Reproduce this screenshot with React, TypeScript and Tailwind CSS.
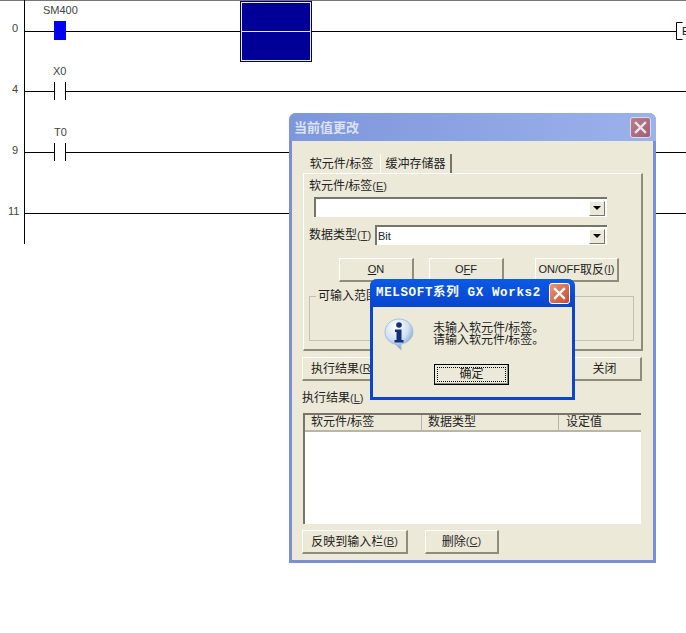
import React from "react";

const cjk = "font-['Liberation_Sans','Noto_Sans_CJK_SC',sans-serif]";

function Key({ k }: { k: string }) {
  return (
    <span className="text-[11px] text-[#333]">
      (<span className="underline">{k}</span>)
    </span>
  );
}

function XpButton({ className, children }: { className: string; children: React.ReactNode }) {
  return (
    <div
      className={`flex h-[24px] items-center justify-center whitespace-nowrap border-t border-l border-t-white border-l-white border-r-2 border-b-2 border-r-[#8f8c7c] border-b-[#8f8c7c] bg-[#ece9d8] text-[12px] text-[#222] ${className}`}
    >
      {children}
    </div>
  );
}

function Combo({ className, children }: { className: string; children?: React.ReactNode }) {
  return (
    <div className={`flex h-[20px] items-center justify-between border-t-2 border-l-2 border-t-[#77756a] border-l-[#77756a] bg-white pl-[1px] pr-[2px] ${className}`}>
      <span className="text-[11px] text-[#223]">{children}</span>
      <div className="flex h-[15px] w-[16px] items-center justify-center border-t border-l border-t-white border-l-white border-r border-b border-r-[#77756a] border-b-[#77756a] bg-[#ece9d8]">
        <div className="h-0 w-0 border-x-[4px] border-t-[4px] border-x-transparent border-t-black" />
      </div>
    </div>
  );
}

function CloseBox({ muted }: { muted?: boolean }) {
  return (
    <div
      className={`flex h-[21px] w-[21px] items-center justify-center rounded-[3px] border ${
        muted ? "border-[#d8dcf0] bg-gradient-to-br from-[#b8808c] to-[#a05c78]" : "border-white bg-gradient-to-br from-[#e8957c] to-[#c8482a]"
      }`}
    >
      <svg width="13" height="13" viewBox="0 0 13 13">
        <path d="M2 2 L11 11 M11 2 L2 11" stroke={muted ? "#f0e4ea" : "#fff"} strokeWidth="2.4" strokeLinecap="square" />
      </svg>
    </div>
  );
}

function Contact({ x, y, filled }: { x: number; y: number; filled?: boolean }) {
  return filled ? (
    <rect x={x} y={y - 9} width={12} height={19} fill="#0000f0" />
  ) : (
    <path d={`M${x + 0.5} ${y - 9}V${y + 9}M${x + 11.5} ${y - 9}V${y + 9}`} stroke="#000" fill="none" />
  );
}

function Ladder() {
  const texts = "font-['Liberation_Sans',sans-serif] text-[11px]";
  return (
    <svg className="absolute inset-0" width="686" height="633" viewBox="0 0 686 633">
      <rect width="686" height="1" fill="#777" />
      <path d="M24.5 0V244" stroke="#000" />
      <path d="M25 31.5H240M312 31.5H676" stroke="#000" />
      <path d="M25 91.5H54M66 91.5H686" stroke="#000" />
      <path d="M25 152.5H54M66 152.5H686" stroke="#000" />
      <path d="M25 213.5H686" stroke="#000" />
      <Contact x={54} y={30} filled />
      <Contact x={54} y={91} />
      <Contact x={54} y={152} />
      <rect x="240.5" y="1.5" width="71" height="60" fill="#000099" stroke="#00006e" />
      <rect x="241.5" y="2.5" width="69" height="58" fill="none" stroke="#e8e8f4" />
      <path d="M241 31.5H311" stroke="#e8e8f4" />
      <path d="M682.5 22.5H676.5V39.5H682.5" stroke="#000" fill="none" />
      <text x="682" y="35" className={texts} fill="#111">E</text>
      <g className={texts} fill="#444">
        <text x="43" y="14">SM400</text>
        <text x="53" y="75">X0</text>
        <text x="54" y="136">T0</text>
        <text x="12" y="32">0</text>
        <text x="12" y="93">4</text>
        <text x="12" y="154">9</text>
        <text x="8" y="215">11</text>
      </g>
    </svg>
  );
}

function InfoIcon() {
  return (
    <svg width="32" height="34" viewBox="0 0 32 34">
      <defs>
        <radialGradient id="bub" cx="0.4" cy="0.25" r="0.85">
          <stop offset="0" stopColor="#ffffff" />
          <stop offset="0.5" stopColor="#d3e2f5" />
          <stop offset="1" stopColor="#5f86bb" />
        </radialGradient>
      </defs>
      <path d="M16 2C8 2 2 8 2 15c0 7 5 11 10 12l6 6 0-6c7-1 12-6 12-12C30 8 24 2 16 2z" fill="url(#bub)" stroke="#a8c0de" />
      <circle cx="16" cy="8" r="2.8" fill="#14307a" />
      <path d="M12 12.5h6.5V23h2v2.5h-9V23h2v-8h-1.5z" fill="#14307a" />
    </svg>
  );
}

function MainDialog() {
  return (
    <div className="absolute left-[289px] top-[113px] flex h-[450px] w-[367px] flex-col rounded-t-[7px] border-x-[3px] border-b-[3px] border-[#7b8fd6] bg-[#ece9d8]">
      <div className="-mx-[3px] flex h-[28px] items-center justify-between rounded-t-[7px] bg-gradient-to-r from-[#7d96dc] to-[#9bb2ea] pl-[5px] pr-[5px]">
        <span className="pt-[2px] text-[13px] font-bold text-[#dbe2f6]">当前值更改</span>
        <CloseBox muted />
      </div>

      <div className="flex flex-col pl-[11px] pr-[11px]">
        <div className="mt-[12px] flex h-[20px] items-end">
          <div className="flex h-[20px] w-[77px] items-center justify-center pt-[1px] text-[12px] text-[#222]">软元件/标签</div>
          <div className="flex h-[19px] w-[72px] items-center justify-center border-l border-r-2 border-l-white border-r-[#77756a] pt-[1px] text-[12px] text-[#222]">缓冲存储器</div>
        </div>
        <div className="flex h-[178px] w-[340px] flex-col border-t border-l border-t-white border-l-white border-r-2 border-b-2 border-r-[#8f8c7c] border-b-[#8f8c7c] px-[5px]">
          <div className="mt-[4px] flex h-[16px] items-center text-[12px] text-[#222]">
            软元件/标签<Key k="E" />
          </div>
          <Combo className="ml-[5px] mt-[3px] w-[293px]" />
          <div className="mt-[8px] flex items-center text-[12px] text-[#222]">
            <span className="w-[66px] whitespace-nowrap">
              数据类型<Key k="T" />
            </span>
            <Combo className="w-[232px]">Bit</Combo>
          </div>
          <div className="mt-[13px] flex">
            <XpButton className="ml-[30px] w-[75px]">
              <span className="text-[11px]"><span className="underline">O</span>N</span>
            </XpButton>
            <XpButton className="ml-[15px] w-[75px]">
              <span className="text-[11px]">O<span className="underline">F</span>F</span>
            </XpButton>
            <XpButton className="ml-[31px] w-[84px]">
              <span className="text-[11px]">ON/OFF</span>取反<Key k="I" />
            </XpButton>
          </div>
          <fieldset className="mt-[7px] h-[52px] w-[325px] border border-[#c3c0ae] pl-[6px]">
            <legend className="px-[2px] text-[12px] leading-[14px] text-[#222]">可输入范围</legend>
          </fieldset>
        </div>

        <div className="-ml-[1px] mt-[6px] flex w-[340px] justify-between">
          <XpButton className="w-[100px] justify-start pl-[8px]">执行结果<Key k="R" /></XpButton>
          <XpButton className="w-[74px]">关闭</XpButton>
        </div>
        <div className="-ml-[1px] mt-[9px] flex h-[16px] items-center text-[12px] text-[#222]">
          执行结果<Key k="L" />
        </div>
        <div className="mt-[7px] flex h-[111px] w-[338px] flex-col border-t-2 border-l-2 border-t-[#77756a] border-l-[#77756a] bg-white">
          <div className="flex h-[17px] border-b-2 border-b-[#b9b6a4] bg-[#ece9d8] text-[12px] text-[#222]">
            <div className="w-[117px] border-r border-r-[#b9b6a4] pl-[6px] leading-[15px]">软元件/标签</div>
            <div className="w-[137px] border-r border-r-[#b9b6a4] pl-[6px] leading-[15px]">数据类型</div>
            <div className="flex-1 pl-[7px] leading-[15px]">设定值</div>
          </div>
        </div>
        <div className="-ml-[1px] mt-[6px] flex gap-[17px]">
          <XpButton className="w-[106px]">反映到输入栏<Key k="B" /></XpButton>
          <XpButton className="w-[74px]">删除<Key k="C" /></XpButton>
        </div>
      </div>
    </div>
  );
}

function MessageBox() {
  return (
    <div className="absolute left-[370px] top-[279px] flex h-[121px] w-[205px] flex-col rounded-t-[7px] border-x-[3px] border-b-[3px] border-[#0a45cc] bg-[#ece9d8]">
      <div className="-mx-[3px] flex h-[28px] items-center justify-between rounded-t-[7px] bg-gradient-to-b from-[#0a5ae6] to-[#0a44cc] pl-[6px] pr-[5px]">
        <span className="whitespace-pre font-['Liberation_Mono','Noto_Sans_CJK_SC',monospace] text-[12.5px] font-bold tracking-[0.65px] text-white">MELSOFT系列 GX Works2</span>
        <CloseBox />
      </div>
      <div className="flex pl-[10px] pt-[10px]">
        <InfoIcon />
        <div className="ml-[18px] mt-[5px] text-[12px] leading-[12px] text-[#222]">
          <div>未输入软元件/标签。</div>
          <div>请输入软元件/标签。</div>
        </div>
      </div>
      <div className="ml-[61px] mt-[13px] flex h-[21px] w-[75px] items-center justify-center border border-black p-[2px] shadow-[inset_-1px_-1px_0_#8f8c7c]">
        <div className="flex h-full w-full items-center justify-center border border-dotted border-black pb-[1px] text-[12px] text-[#222]">确定</div>
      </div>
    </div>
  );
}

export default function App() {
  return (
    <div className={`relative h-[633px] w-[686px] overflow-hidden bg-white ${cjk}`}>
      <Ladder />
      <MainDialog />
      <MessageBox />
    </div>
  );
}
